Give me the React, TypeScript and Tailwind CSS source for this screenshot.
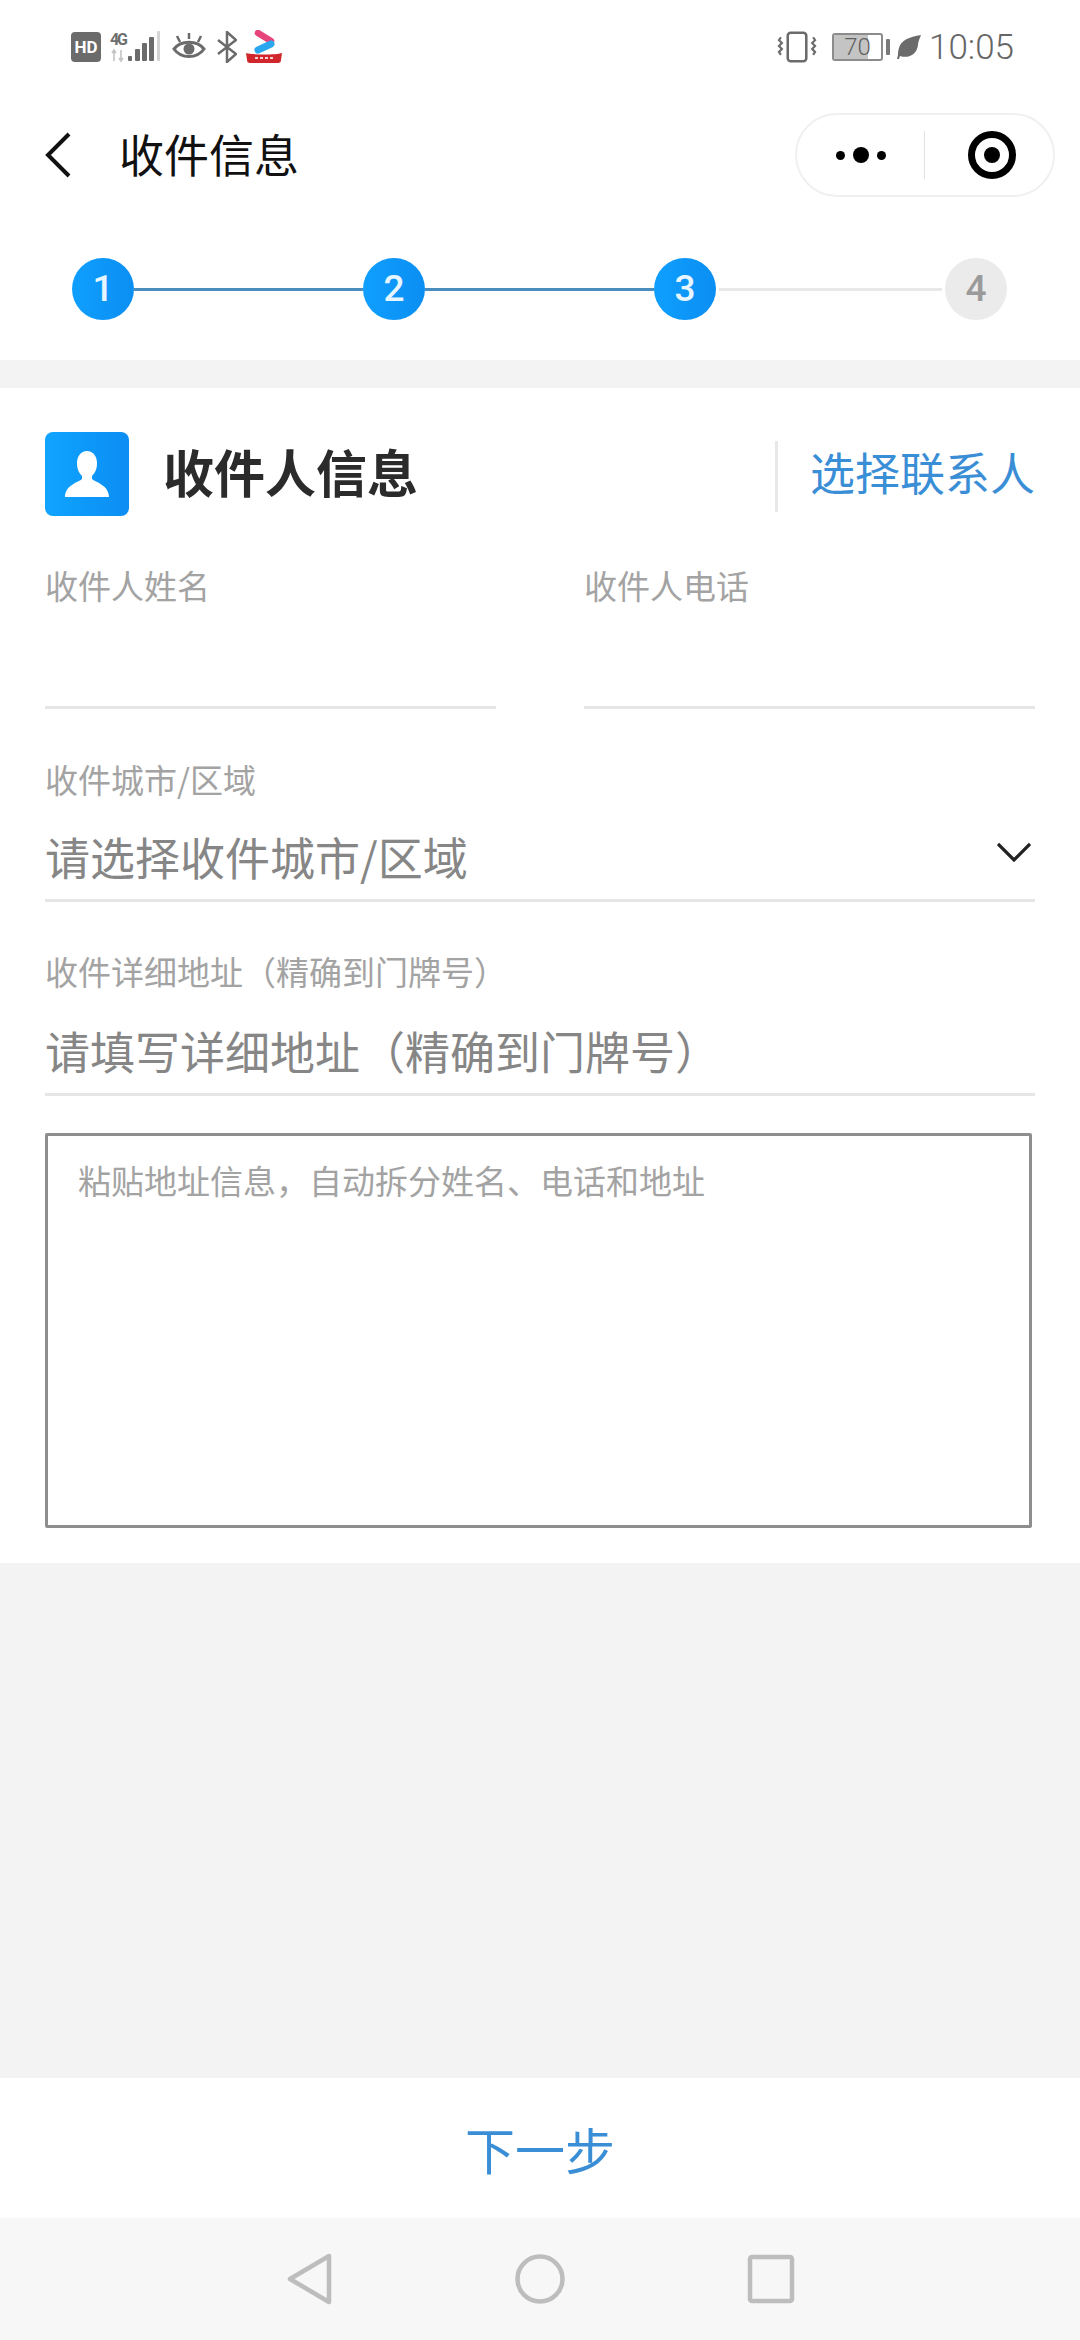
const cjk = "font-['Noto_Sans_CJK_SC','Noto_Sans',sans-serif]"

function StatusLeft() {
  return (
    <div className="flex items-center">
      <span className="w-[30px] h-[30px] rounded-[4px] bg-[#6b6b6b] text-white text-[17px] font-bold leading-[30px] text-center font-['Roboto',sans-serif]">HD</span>
      <svg width="52" height="34" viewBox="0 0 52 34" className="ml-[9px]">
        <text x="0" y="15" fontSize="16" fontWeight="700" fill="#6f6f6f" fontFamily="Roboto, sans-serif" textLength="18">4G</text>
        <path d="M4 20v11M2 23l2-3 2 3M11 31V20M9 28l2 3 2-3" stroke="#c4c4c4" strokeWidth="1.6" fill="none" />
        <rect x="18" y="26" width="4" height="5" rx="1" fill="#6b6b6b" />
        <rect x="25" y="19" width="5" height="12" rx="1" fill="#6b6b6b" />
        <rect x="32" y="13" width="5" height="18" rx="1" fill="#6b6b6b" />
        <rect x="39" y="7" width="5" height="24" rx="1" fill="#6b6b6b" />
        <rect x="47" y="1" width="3" height="30" rx="1" fill="#d4d4d4" />
      </svg>
      <svg width="34" height="30" viewBox="0 0 34 30" className="ml-[10px]" fill="none" stroke="#6b6b6b" strokeWidth="3">
        <path d="M2 17c7-9 23-9 30 0-7 10-23 10-30 0z" />
        <circle cx="17" cy="17" r="5.5" fill="#6b6b6b" stroke="none" />
        <path d="M17 1v6M5 4l3 6M29 4l-3 6" strokeWidth="2.5" />
      </svg>
      <svg width="20" height="32" viewBox="0 0 20 32" className="ml-[11px]" fill="none" stroke="#6b6b6b" strokeWidth="2.5">
        <path d="M1 9l18 14-9 8V1l9 8L1 23" />
      </svg>
      <svg width="36" height="34" viewBox="0 0 36 34" className="ml-[9px]" fill="none">
        <path d="M12 3l13 8" stroke="#e8447c" strokeWidth="6.5" strokeLinecap="round" />
        <path d="M25 14l-13 6" stroke="#2aa7ee" strokeWidth="7" strokeLinecap="round" />
        <path d="M0 23c6 2 30 2 36 0l-1 7a3 3 0 0 1-3 3H4a3 3 0 0 1-3-3z" fill="#d0262c" />
        <path d="M9 28h18" stroke="#f6d5d5" strokeWidth="2" strokeDasharray="3 2" />
      </svg>
    </div>
  )
}

function StatusRight() {
  return (
    <div className="flex items-center">
      <svg width="41" height="32" viewBox="0 0 42 32" fill="none" stroke="#6b6b6b">
        <rect x="11" y="1.5" width="19" height="29" rx="3" strokeWidth="2.6" />
        <path d="M4 6l-2 3 3 3-3 3 3 3-3 3 2 3M37 6l2 3-3 3 3 3-3 3 3 3-2 3" strokeWidth="2.2" />
      </svg>
      <div className="relative ml-[14px] w-[51px] h-[28px] rounded-[3px] border-2 border-[#8c8c8c] overflow-hidden">
        <div className="absolute left-0 top-0 bottom-0 w-[34px] bg-[#c4c4c4]" />
        <span className="absolute inset-0 text-center text-[24px] leading-[24px] text-[#5f5f5f] font-['Roboto',sans-serif] font-light">70</span>
      </div>
      <span className="ml-[3px] w-[4px] h-[16px] rounded-[1px] bg-[#7a7a7a]" />
      <svg width="24" height="24" viewBox="0 0 24 24" className="ml-[7px]">
        <path d="M24 0C12 2 4 5 2 13c-1 3-1 5-1 7l-1 4 2 0 1-3c9 3 17-2 18-11 0-4 2-7 3-10z" fill="#6b6b6b" />
      </svg>
      <span className="ml-[8px] text-[35px] leading-none text-[#666666] font-['Roboto',sans-serif] font-light">10:05</span>
    </div>
  )
}

function Step({ n, active }: { n: number; active: boolean }) {
  return (
    <div className={`w-[62px] h-[62px] rounded-full flex items-center justify-center text-[37px] font-medium font-['Roboto',sans-serif] ${active ? 'bg-gradient-to-r from-[#0f9fff] to-[#0b8ef2] text-[#e6f5ff]' : 'bg-[#ebebeb] text-[#9a9a9a]'}`}>
      {n}
    </div>
  )
}

function Field({ label, value, bodyClass, chevron }: { label: string; value?: string; bodyClass: string; chevron?: boolean }) {
  return (
    <div className="flex-1 min-w-0">
      <div className="h-[46px] text-[33px] leading-[42px] text-[#a3a3a3]">{label}</div>
      <div className={`flex items-end justify-between border-b-[3px] border-[#e6e6e6] ${bodyClass}`}>
        {value && <span className="text-[45px] leading-[60px] text-[#868686] whitespace-nowrap">{value}</span>}
        {chevron && (
          <svg width="34" height="20" viewBox="0 0 34 20" fill="none" stroke="#222222" strokeWidth="3.2" className="mb-[25px] mr-[4px]">
            <path d="M1 2l16 16L33 2" />
          </svg>
        )}
      </div>
    </div>
  )
}

export default function App() {
  return (
    <div className={`w-[1080px] h-[2340px] flex flex-col bg-[#f3f3f3] overflow-hidden ${cjk}`}>
      <div className="h-[94px] shrink-0 bg-white flex items-center justify-between pl-[71px] pr-[66px]">
        <StatusLeft />
        <StatusRight />
      </div>

      <div className="h-[122px] shrink-0 bg-white flex items-center pl-[45px] pr-[25px]">
        <svg width="26" height="46" viewBox="0 0 26 46" fill="none" stroke="#111111" strokeWidth="4">
          <path d="M24 2L3 23l21 21" />
        </svg>
        <span className="ml-[48px] mb-[4px] text-[45px] leading-none text-[#111111]">收件信息</span>
        <div className="ml-auto w-[260px] h-[84px] rounded-full border-2 border-[#f0f0f0] flex items-center">
          <div className="flex-1 flex items-center justify-center gap-[8px]">
            <span className="w-[9px] h-[9px] rounded-full bg-black" />
            <span className="w-[16px] h-[16px] rounded-full bg-black" />
            <span className="w-[9px] h-[9px] rounded-full bg-black" />
          </div>
          <div className="w-[1px] h-[48px] bg-[#e2e2e2]" />
          <div className="w-[128px] pl-[6px] flex items-center justify-center">
            <svg width="48" height="48" viewBox="0 0 48 48">
              <circle cx="24" cy="24" r="20.5" fill="none" stroke="#000000" strokeWidth="7" />
              <circle cx="24" cy="24" r="8" fill="#000000" />
            </svg>
          </div>
        </div>
      </div>

      <div className="h-[144px] shrink-0 bg-white flex items-start pt-[42px] pl-[72px] pr-[73px]">
        <div className="w-full flex items-center">
          <Step n={1} active />
          <div className="flex-1 h-[3px] bg-[#4a8dbf]" />
          <Step n={2} active />
          <div className="flex-1 h-[3px] bg-[#4a8dbf]" />
          <Step n={3} active />
          <div className="flex-1">
            <div className="mx-[3px] h-[3px] bg-[#e8e8e8]" />
          </div>
          <Step n={4} active={false} />
        </div>
      </div>

      <div className="h-[28px] shrink-0" />

      <div className="shrink-0 bg-white pt-[44px] pb-[35px] px-[45px]">
        <div className="h-[84px] flex items-center">
          <div className="w-[84px] h-[84px] rounded-[8px] bg-gradient-to-r from-[#10a4ff] to-[#0c8df3] flex items-center justify-center">
            <svg width="44" height="46" viewBox="0 0 44 46" fill="#ffffff">
              <path d="M22 0c6 0 10 5 10 12 0 6-2 10-5 13v3c3 3 17 6 17 18H0c0-12 14-15 17-18v-3c-3-3-5-7-5-13C12 5 16 0 22 0z" />
            </svg>
          </div>
          <span className="ml-[34px] mb-[6px] text-[51px] leading-none font-bold text-[#2b2b2b]">收件人信息</span>
          <div className="ml-auto mt-[4px] w-[3px] h-[71px] bg-[#e8e8e8]" />
          <span className="ml-[32px] mb-[6px] text-[45px] leading-none text-[#3a8ed6] whitespace-nowrap">选择联系人</span>
        </div>

        <div className="mt-[48px] flex gap-[88px]">
          <Field label="收件人姓名" bodyClass="h-[99px]" />
          <Field label="收件人电话" bodyClass="h-[99px]" />
        </div>

        <div className="mt-[49px]">
          <Field label="收件城市/区域" value="请选择收件城市/区域" bodyClass="h-[98px] pb-[12px]" chevron />
        </div>

        <div className="mt-[48px]">
          <Field label="收件详细地址（精确到门牌号）" value="请填写详细地址（精确到门牌号）" bodyClass="h-[100px] pb-[12px]" />
        </div>

        <div className="mt-[37px] w-[987px] h-[395px] border-[3px] border-[#8e8e8e] rounded-[2px] pt-[21px] pl-[30px] text-[33px] leading-[46px] text-[#a3a3a3]">
          粘贴地址信息，自动拆分姓名、电话和地址
        </div>
      </div>

      <div className="flex-1" />

      <div className="h-[140px] shrink-0 bg-white flex items-center justify-center text-[50px] leading-none text-[#3a8ed6]">
        下一步
      </div>

      <div className="h-[122px] shrink-0 bg-[#f7f7f7] flex items-center justify-center">
        <svg width="504" height="52" viewBox="0 0 504 52" fill="none" stroke="#bdbdbd" strokeWidth="4.5" strokeLinejoin="round" className="overflow-visible">
          <path d="M41 3v46L2 26z" />
          <circle cx="252" cy="26" r="22.5" />
          <rect x="462" y="4" width="42" height="44" rx="2" />
        </svg>
      </div>
    </div>
  )
}
